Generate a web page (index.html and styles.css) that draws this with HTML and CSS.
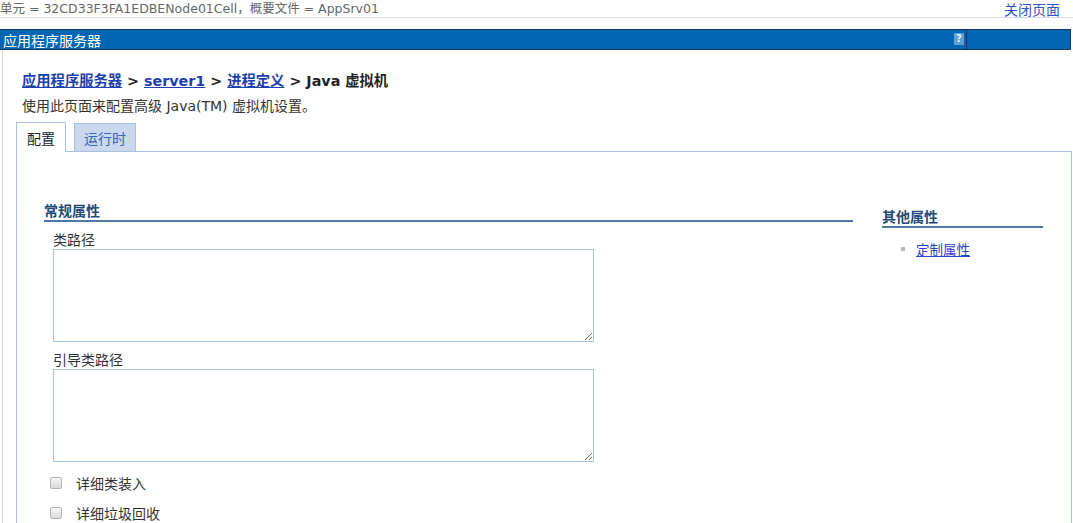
FILE: index.html
```html
<!DOCTYPE html>
<html lang="zh-CN">
<head>
<meta charset="utf-8">
<title>Java 虚拟机</title>
<link rel="stylesheet" href="styles.css">
</head>
<body>
<div class="topline">
  <span class="scope">单元 = 32CD33F3FA1EDBENode01Cell，概要文件 = AppSrv01</span>
  <a class="close" href="#">关闭页面</a>
</div>
<div class="titlebar">
  <span class="title">应用程序服务器</span>
  <span class="help"><span class="qicon">?</span></span>
</div>
<div class="content">
  <div class="crumbs">
    <a href="#">应用程序服务器</a> &gt; <a href="#">server1</a> &gt; <a href="#">进程定义</a> &gt; Java 虚拟机
  </div>
  <p class="desc">使用此页面来配置高级 Java(TM) 虚拟机设置。</p>
  <div class="tabs">
    <div class="tab active">配置</div>
    <div class="tab">运行时</div>
  </div>
  <div class="panel">
    <div class="main">
      <h3 class="sect">常规属性</h3>
      <div class="field">
        <label class="flabel">类路径</label>
        <textarea class="ta"></textarea>
      </div>
      <div class="field">
        <label class="flabel">引导类路径</label>
        <textarea class="ta"></textarea>
      </div>
      <label class="check"><input type="checkbox"><span>详细类装入</span></label>
      <label class="check"><input type="checkbox"><span>详细垃圾回收</span></label>
    </div>
    <div class="side">
      <h3 class="sect">其他属性</h3>
      <ul class="links">
        <li><a href="#">定制属性</a></li>
      </ul>
    </div>
  </div>
</div>
</body>
</html>
```

FILE: styles.css
```css
html, body {
  margin: 0;
  padding: 0;
  background: #fff;
  overflow: hidden;
}
body {
  font-family: "DejaVu Sans", "Noto Sans CJK SC", sans-serif;
  font-size: 13px;
  color: #333;
  height: 523px;
}
.topline {
  display: flex;
  justify-content: space-between;
  align-items: center;
  height: 17px;
  border-bottom: 1px solid #dcdcdc;
  padding-right: 13px;
}
.scope {
  font-size: 12.5px;
  color: #666;
  line-height: 17px;
}
.close {
  font-size: 14px;
  color: #2f55c0;
  text-decoration: none;
}
.titlebar {
  margin-top: 11px;
  margin-right: 2px;
  height: 19px;
  background: #0066b4;
  border-top: 1px solid #17365c;
  border-bottom: 1px solid #17365c;
  border-right: 1px solid #17365c;
  display: flex;
  align-items: center;
}
.title {
  flex: 1;
  color: #fff;
  font-size: 14px;
  padding-left: 3px;
}
.help {
  width: 103px;
  height: 19px;
  border-left: 1px solid #17365c;
  position: relative;
}
.qicon {
  position: absolute;
  left: -13px;
  top: 3px;
  width: 10px;
  height: 12px;
  background: #5f9fd6;
  color: #e8f2fb;
  font-size: 10px;
  font-weight: bold;
  line-height: 12px;
  text-align: center;
}
.content {
  margin-left: 2px;
  border-left: 1px solid #d5d5d5;
  height: 480px;
  padding-left: 13px;
}
.crumbs {
  padding-top: 22px;
  padding-left: 6px;
  font-size: 14.3px;
  font-weight: bold;
  color: #222;
  line-height: 19px;
}
.crumbs a {
  color: #1d3fb0;
  text-decoration: underline;
}
.desc {
  margin: 6px 0 0 6px;
  font-size: 14px;
  line-height: 18px;
  color: #333;
}
.tabs {
  display: flex;
  align-items: flex-end;
  gap: 8px;
  margin-top: 7px;
  height: 29px;
}
.tab {
  height: 28px;
  box-sizing: border-box;
  border: 1px solid #a9c1de;
  border-bottom: none;
  padding: 0 9px;
  display: flex;
  align-items: center;
  font-size: 14px;
  background: #c9d8ec;
  color: #3c63b5;
}
.tab.active {
  height: 30px;
  background: #fff;
  color: #222;
  position: relative;
  top: 1px;
  padding: 0 10px;
}
.panel {
  border: 1px solid #a9c1de;
  border-bottom: none;
  margin-right: 1px;
  height: 380px;
  box-sizing: border-box;
  display: flex;
  padding: 51px 0 0 27px;
  gap: 29px;
}
.main {
  width: 809px;
}
.side {
  width: 161px;
  padding-top: 6px;
}
.sect {
  margin: 0;
  font-size: 14px;
  font-weight: bold;
  color: #1f4a78;
  line-height: 16px;
  border-bottom: 2px solid #4d78a6;
  padding-bottom: 1px;
}
.field {
  padding-left: 9px;
}
.field + .field {
  margin-top: 9px;
}
.flabel {
  display: block;
  font-size: 14px;
  color: #333;
  line-height: 18px;
  margin-top: 9px;
}
.field + .field .flabel {
  margin-top: 8px;
}
.ta {
  display: block;
  width: 541px;
  height: 93px;
  box-sizing: border-box;
  border: 1px solid #a8c4dc;
  margin: 0;
  padding: 2px;
  resize: both;
  font-family: inherit;
}
.check {
  display: flex;
  align-items: center;
  margin-left: 5px;
  height: 30px;
  font-size: 14px;
  color: #333;
}
.check:first-of-type {
  margin-top: 6px;
}
.check input {
  width: 12px;
  height: 12px;
  margin: 0 14px 0 1px;
  appearance: none;
  -webkit-appearance: none;
  border: 1px solid #b5b5b5;
  border-radius: 2px;
  background: linear-gradient(#f4f4f4, #dcdcdc);
}
.links {
  list-style: none;
  margin: 11px 0 0 0;
  padding: 0 0 0 19px;
}
.links li {
  display: flex;
  align-items: center;
  font-size: 13.5px;
}
.links li::before {
  content: "";
  width: 4px;
  height: 4px;
  background: #bbb;
  margin-right: 11px;
}
.links a {
  color: #2444c8;
  text-decoration: underline;
}
```
